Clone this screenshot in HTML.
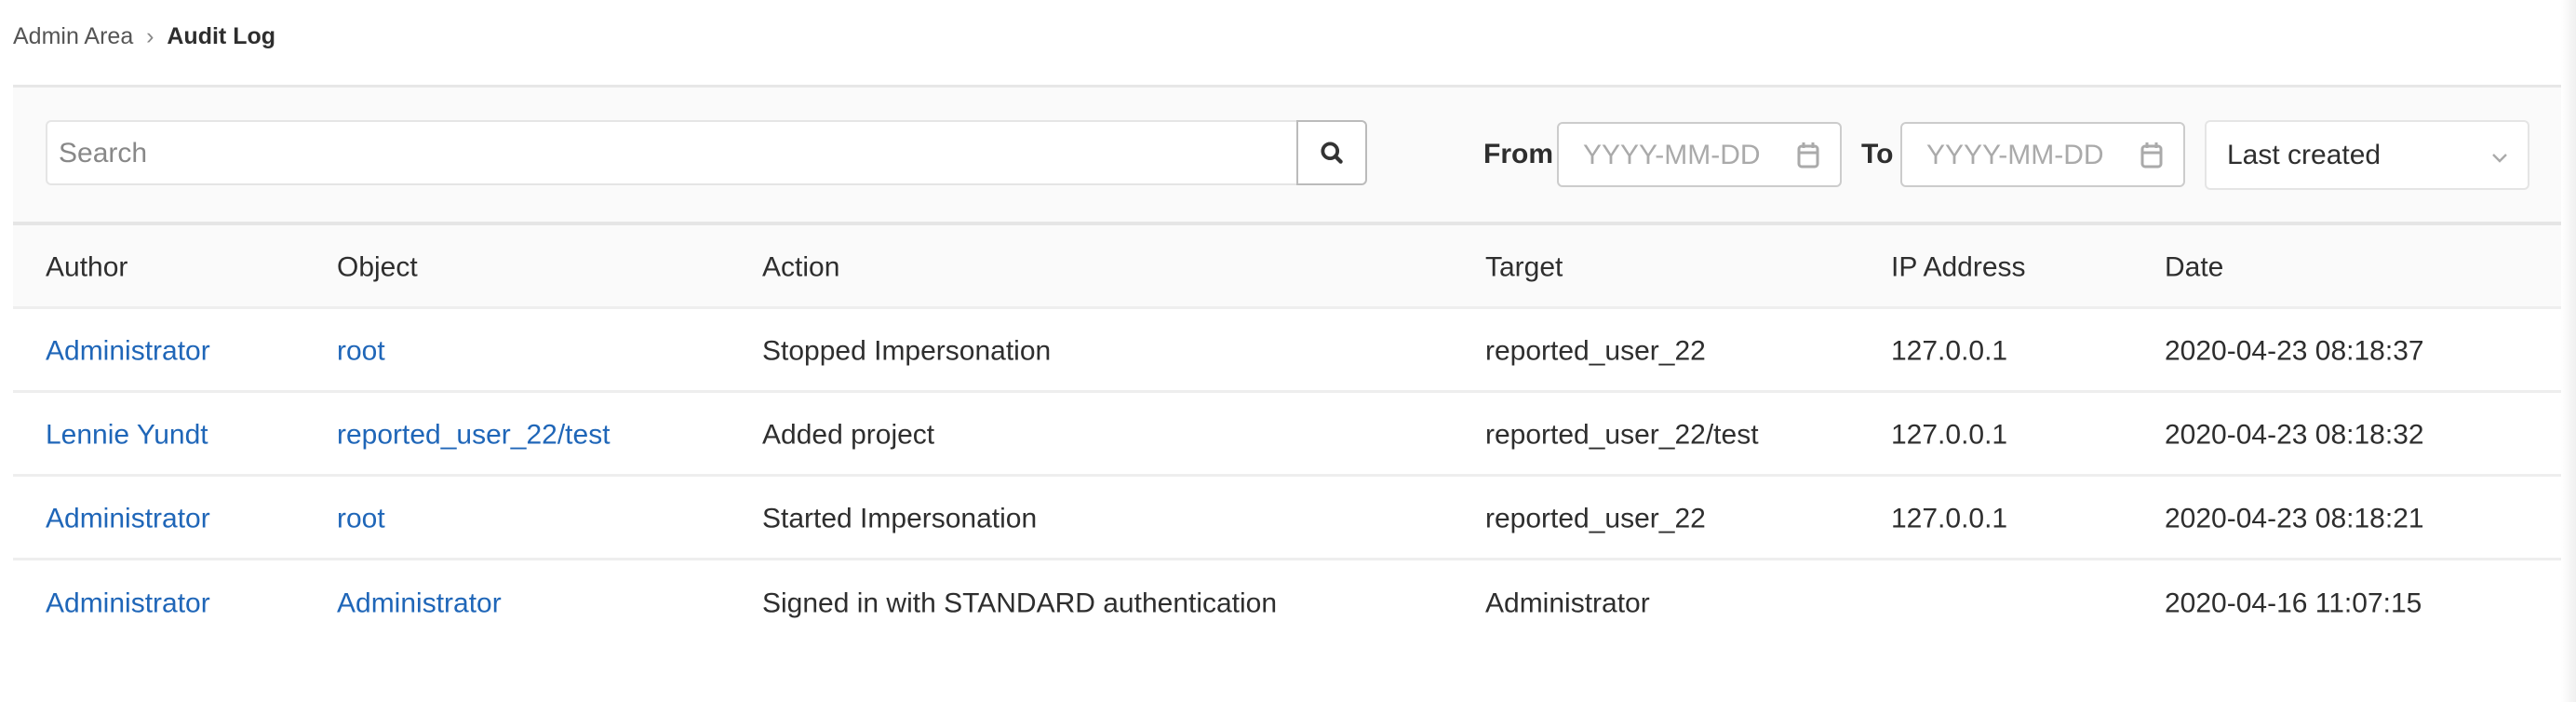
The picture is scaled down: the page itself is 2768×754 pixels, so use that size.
<!DOCTYPE html>
<html><head><style>
*{box-sizing:border-box;margin:0;padding:0}
body{width:2768px;height:754px;background:#fff;font-family:"Liberation Sans",sans-serif;color:#2e2e2e;position:relative;overflow:hidden}
.abs{position:absolute;white-space:nowrap}
.crumb{top:25px;left:14px;font-size:25px;color:#555}
.crumb b{color:#2e2e2e}
.filter{position:absolute;left:14px;top:91px;width:2740px;height:151px;background:#fafafa;border-top:3px solid #e7e7e7;border-bottom:4px solid #e5e5e5}
.input{position:absolute;background:#fff;border:2px solid #ddd;border-radius:6px}
.ph{color:#999;font-size:30px}
.thead{position:absolute;left:14px;top:242px;width:2740px;height:90px;background:#fafafa;border-bottom:3px solid #eee}
.row{position:absolute;left:14px;width:2740px;height:90px;border-bottom:3px solid #eee}
.c{position:absolute;font-size:30px;white-space:nowrap;top:50%;transform:translateY(-46%)}
a{color:#1f66b8;text-decoration:none}
.shade{position:absolute;right:0;top:0;width:16px;height:754px;background:linear-gradient(to right,#fff,#f0f0f0)}
</style></head><body>
<div class="abs crumb">Admin Area &nbsp;<span style="color:#888">›</span>&nbsp; <b>Audit Log</b></div>
<div class="filter"></div>
<div class="input" style="left:49px;top:129px;width:1346px;height:70px;border-radius:6px 0 0 6px;border-color:#e5e5e5"><span class="ph abs" style="left:12px;top:17px;color:#888">Search</span></div>
<div class="input" style="left:1393px;top:129px;width:76px;height:70px;border-radius:0 6px 6px 0;border-color:#bbb">
<svg width="28" height="28" viewBox="0 0 16 16" style="position:absolute;left:22px;top:19px"><circle cx="7" cy="7" r="4.5" fill="none" stroke="#333" stroke-width="2.2"/><path d="M10.2 10.2L13.5 13.5" stroke="#333" stroke-width="2.4" stroke-linecap="round"/></svg></div>
<div class="abs" style="left:1594px;top:149px;font-size:30px;font-weight:bold">From</div>
<div class="input" style="left:1673px;top:131px;width:306px;height:70px;border-color:#ccc"><span class="ph abs" style="left:26px;top:17px;color:#aaa">YYYY-MM-DD</span>
<svg width="24" height="32" viewBox="0 0 12 16" style="position:absolute;left:256px;top:18px"><rect x="1" y="3" width="10" height="11" rx="1.5" fill="none" stroke="#aaa" stroke-width="1.5"/><path d="M1 6.5H11M3.5 1V4M8.5 1V4" stroke="#aaa" stroke-width="1.5"/></svg></div>
<div class="abs" style="left:2000px;top:149px;font-size:30px;font-weight:bold">To</div>
<div class="input" style="left:2042px;top:131px;width:306px;height:70px;border-color:#ccc"><span class="ph abs" style="left:26px;top:17px;color:#aaa">YYYY-MM-DD</span>
<svg width="24" height="32" viewBox="0 0 12 16" style="position:absolute;left:256px;top:18px"><rect x="1" y="3" width="10" height="11" rx="1.5" fill="none" stroke="#aaa" stroke-width="1.5"/><path d="M1 6.5H11M3.5 1V4M8.5 1V4" stroke="#aaa" stroke-width="1.5"/></svg></div>
<div class="input" style="left:2369px;top:129px;width:349px;height:75px;border-color:#e5e5e5"><span class="abs" style="left:22px;top:19px;font-size:30px">Last created</span>
<svg width="20" height="14" viewBox="0 0 10 7" style="position:absolute;left:305px;top:32px"><path d="M1.5 1.5L5 5L8.5 1.5" fill="none" stroke="#aaa" stroke-width="1.2"/></svg></div>
<div class="thead">
<span class="c" style="left:35px">Author</span><span class="c" style="left:348px">Object</span><span class="c" style="left:805px">Action</span><span class="c" style="left:1582px">Target</span><span class="c" style="left:2018px">IP Address</span><span class="c" style="left:2312px">Date</span></div>
<div class="row" style="top:332px"><span class="c" style="left:35px"><a>Administrator</a></span><span class="c" style="left:348px"><a>root</a></span><span class="c" style="left:805px">Stopped Impersonation</span><span class="c" style="left:1582px">reported_user_22</span><span class="c" style="left:2018px">127.0.0.1</span><span class="c" style="left:2312px">2020-04-23 08:18:37</span></div>
<div class="row" style="top:422px"><span class="c" style="left:35px"><a>Lennie Yundt</a></span><span class="c" style="left:348px"><a>reported_user_22/test</a></span><span class="c" style="left:805px">Added project</span><span class="c" style="left:1582px">reported_user_22/test</span><span class="c" style="left:2018px">127.0.0.1</span><span class="c" style="left:2312px">2020-04-23 08:18:32</span></div>
<div class="row" style="top:512px"><span class="c" style="left:35px"><a>Administrator</a></span><span class="c" style="left:348px"><a>root</a></span><span class="c" style="left:805px">Started Impersonation</span><span class="c" style="left:1582px">reported_user_22</span><span class="c" style="left:2018px">127.0.0.1</span><span class="c" style="left:2312px">2020-04-23 08:18:21</span></div>
<div class="row" style="top:602px;border-bottom:none"><span class="c" style="left:35px"><a>Administrator</a></span><span class="c" style="left:348px"><a>Administrator</a></span><span class="c" style="left:805px">Signed in with STANDARD authentication</span><span class="c" style="left:1582px">Administrator</span><span class="c" style="left:2312px">2020-04-16 11:07:15</span></div>
<div class="shade"></div>
</body></html>
